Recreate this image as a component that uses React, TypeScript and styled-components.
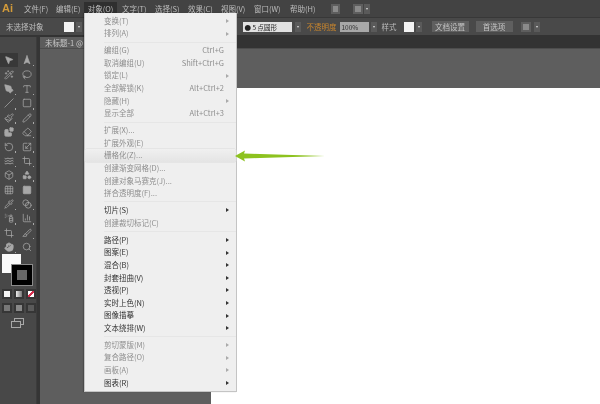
import { FunctionComponent } from "react";
import styled, { createGlobalStyle } from "styled-components";
import {
  ChartColumn,
  Eraser,
  Grid3x3,
  Hand,
  Lasso,
  MousePointer2,
  Navigation2,
  Paintbrush,
  Pencil,
  PenTool,
  Pipette,
  RotateCcw,
  Scaling,
  Search,
  Shapes,
  Slash,
  Square,
  Type,
  Waves,
  Wand2,
  Crop,
  Blend,
  Blocks,
  Box,
  SprayCan,
  Slice,
  type LucideIcon,
} from "lucide-react";

const GlobalStyle = createGlobalStyle`
  html, body { margin: 0; padding: 0; background: #5c5c5c; }
  * { box-sizing: border-box; }
`;

const Root = styled.div`
  position: relative;
  width: 600px;
  height: 404px;
  overflow: hidden;
  display: flex;
  flex-direction: column;
  background: #4a4a4a;
  font-family: "Noto Sans CJK SC", "Noto Sans", sans-serif;
  font-size: 7.5px;
  color: #bcbcbc;
  filter: blur(0.5px);
`;

const MenuBar = styled.div`
  height: 17px;
  flex: none;
  display: flex;
  align-items: center;
  padding-left: 2px;
  background: #434343;
`;
const Logo = styled.div`
  width: 12px;
  height: 13px;
  margin-right: 10px;
  font: bold 11px/13px "Liberation Sans", sans-serif;
  color: #d19a3a;
`;
const MenuTitle = styled.div<{ $left: number; $w: number; $active?: boolean }>`
  width: ${(p) => p.$w}px;
  height: 13px;
  margin-left: ${(p) => p.$left}px;
  line-height: 13px;
  text-align: center;
  white-space: nowrap;
  background: ${(p) => (p.$active ? "#2f2f2f" : "transparent")};
`;
const BarIcon = styled.div<{ $left: number; $w: number }>`
  width: ${(p) => p.$w}px;
  height: 10px;
  margin-left: ${(p) => p.$left}px;
  background: #8a8a8a;
  border: 2px solid #5e5e5e;
`;

const OptionBar = styled.div`
  height: 18px;
  flex: none;
  display: flex;
  align-items: center;
  padding-left: 6px;
  background: #494949;
  border-top: 1px solid #383838;
`;
const Label = styled.div<{ $left?: number; $color?: string }>`
  margin-left: ${(p) => p.$left ?? 0}px;
  color: ${(p) => p.$color ?? "#bcbcbc"};
  white-space: nowrap;
`;
const Swatch = styled.div<{ $left: number }>`
  width: 10px;
  height: 10px;
  margin-left: ${(p) => p.$left}px;
  background: #f4f4f4;
`;
const Drop = styled.div<{ $left?: number }>`
  width: 6px;
  height: 10px;
  margin-left: ${(p) => p.$left ?? 2}px;
  background: #5a5a5a;
  display: flex;
  align-items: center;
  justify-content: center;
  &::after {
    content: "";
    border: 1.5px solid transparent;
    border-top: 2px solid #ddd;
    border-bottom: 0;
  }
`;
const Field = styled.div<{ $left: number; $w: number; $bg: string; $color: string }>`
  width: ${(p) => p.$w}px;
  height: 10px;
  margin-left: ${(p) => p.$left}px;
  padding-left: 2px;
  background: ${(p) => p.$bg};
  color: ${(p) => p.$color};
  font-size: 6.5px;
  line-height: 10px;
  white-space: nowrap;
`;
const BarButton = styled.div<{ $left: number }>`
  width: 37px;
  height: 11px;
  margin-left: ${(p) => p.$left}px;
  background: #5f5f5f;
  color: #c4c4c4;
  text-align: center;
  line-height: 11px;
`;

const Workspace = styled.div`
  flex: 1;
  display: flex;
  min-height: 0;
`;
const ToolPanel = styled.div`
  width: 40px;
  flex: none;
  padding-top: 2px;
  background: #353535;
`;
const ToolInner = styled.div`
  width: 37px;
  height: 100%;
  padding-top: 16px;
  background: #484848;
  border-right: 1px solid #3c3c3c;
`;
const ToolGrid = styled.div`
  display: grid;
  grid-template-columns: 18px 18px;
  grid-auto-rows: 14.4px;
`;
const ToolCell = styled.div<{ $active?: boolean; $mark?: boolean }>`
  position: relative;
  display: flex;
  align-items: center;
  justify-content: center;
  color: #a8a8a8;
  background: ${(p) => (p.$active ? "#383838" : "transparent")};
  &::after {
    content: "";
    display: ${(p) => (p.$mark ? "block" : "none")};
    position: absolute;
    right: 2px;
    bottom: 1px;
    width: 1.5px;
    height: 1.5px;
    background: #aaa;
  }
`;
const ColorStack = styled.div`
  position: relative;
  height: 33px;
  margin-left: 2px;
`;
const FillBox = styled.div`
  position: absolute;
  left: 0;
  top: 0;
  width: 19px;
  height: 19px;
  background: #fafafa;
`;
const StrokeBox = styled.div`
  position: absolute;
  left: 10px;
  top: 11px;
  width: 20px;
  height: 20px;
  background: #666;
  border: 5px solid #000;
  outline: 1px solid #8a8a8a;
`;
const MiniRow = styled.div<{ $top: number }>`
  display: flex;
  gap: 2px;
  margin: ${(p) => p.$top}px 0 0 2px;
`;
const Mini = styled.div<{ $bg: string }>`
  width: 10px;
  height: 10px;
  background: ${(p) => p.$bg};
  border: 2px solid #363636;
`;
const ScreenMode = styled.div`
  margin: 5px 0 0 11px;
  color: #a8a8a8;
  display: flex;
`;

const DocumentArea = styled.div`
  flex: 1;
  display: flex;
  flex-direction: column;
  min-width: 0;
`;
const TabStrip = styled.div`
  height: 13px;
  flex: none;
  display: flex;
  align-items: flex-end;
  background: #333;
`;
const DocTab = styled.div`
  width: 60px;
  height: 11px;
  padding-left: 5px;
  line-height: 11px;
  background: #5c5c5c;
  color: #c8c8c8;
  white-space: nowrap;
`;
const Pasteboard = styled.div`
  flex: 1;
  padding: 39px 0 0 171px;
  background: #5e5e5e;
  border-top: 1px solid #4d4d4d;
`;
const Artboard = styled.div`
  height: 100%;
  background: #fff;
`;

const Menu = styled.div`
  position: absolute;
  left: 84px;
  top: 13px;
  width: 153px;
  height: 379px;
  padding: 1.7px 0 0;
  background: #efefef;
  border: 1px solid #c4c4c4;
  border-top: 0;
  box-shadow: -1px 0 1px rgba(0, 0, 0, 0.2);
`;
const Row = styled.div<{ $off?: boolean; $hot?: boolean }>`
  height: 12.6px;
  display: flex;
  align-items: center;
  padding: 0 7px 0 19px;
  line-height: 12.6px;
  color: ${(p) => (p.$off ? "#8e8e8e" : "#333")};
  background: ${(p) => (p.$hot ? "linear-gradient(#f0f0f0, #e4e4e4)" : "transparent")};
  box-shadow: ${(p) => (p.$hot ? "0 0 0 0.5px #dcdcdc" : "none")};
  border-radius: 2px;
`;
const RowLabel = styled.span`
  flex: 1;
  white-space: nowrap;
`;
const Shortcut = styled.span`
  margin-right: 5px;
  color: #8e8e8e;
`;
const Caret = styled.span<{ $off?: boolean }>`
  width: 0;
  height: 0;
  border-left: 3px solid ${(p) => (p.$off ? "#aaa" : "#333")};
  border-top: 2px solid transparent;
  border-bottom: 2px solid transparent;
`;
const Separator = styled.div`
  height: 4.4px;
  margin-left: 19px;
  display: flex;
  align-items: center;
  &::after {
    content: "";
    flex: 1;
    height: 1px;
    background: #e6e6e6;
  }
`;
const ArrowMark = styled.svg`
  position: absolute;
  left: 234px;
  top: 150px;
`;

type Item = { t: string; off?: boolean; sub?: boolean; key?: string; hot?: boolean } | "sep";
const items: Item[] = [
  { t: "变换(T)", off: true, sub: true },
  { t: "排列(A)", off: true, sub: true },
  "sep",
  { t: "编组(G)", off: true, key: "Ctrl+G" },
  { t: "取消编组(U)", off: true, key: "Shift+Ctrl+G" },
  { t: "锁定(L)", off: true, sub: true },
  { t: "全部解锁(K)", off: true, key: "Alt+Ctrl+2" },
  { t: "隐藏(H)", off: true, sub: true },
  { t: "显示全部", off: true, key: "Alt+Ctrl+3" },
  "sep",
  { t: "扩展(X)...", off: true },
  { t: "扩展外观(E)", off: true },
  { t: "栅格化(Z)...", off: true, hot: true },
  { t: "创建渐变网格(D)...", off: true },
  { t: "创建对象马赛克(J)...", off: true },
  { t: "拼合透明度(F)...", off: true },
  "sep",
  { t: "切片(S)", sub: true },
  { t: "创建裁切标记(C)", off: true },
  "sep",
  { t: "路径(P)", sub: true },
  { t: "图案(E)", sub: true },
  { t: "混合(B)", sub: true },
  { t: "封套扭曲(V)", sub: true },
  { t: "透视(P)", sub: true },
  { t: "实时上色(N)", sub: true },
  { t: "图像描摹", sub: true },
  { t: "文本绕排(W)", sub: true },
  "sep",
  { t: "剪切蒙版(M)", off: true, sub: true },
  { t: "复合路径(O)", off: true, sub: true },
  { t: "画板(A)", off: true, sub: true },
  { t: "图表(R)", sub: true },
];

const tools: { I: LucideIcon; mark?: boolean; fill?: boolean }[] = [
  { I: MousePointer2, fill: true },
  { I: Navigation2, fill: true, mark: true },
  { I: Wand2 },
  { I: Lasso },
  { I: PenTool, fill: true, mark: true },
  { I: Type, mark: true },
  { I: Slash, mark: true },
  { I: Square, mark: true },
  { I: Paintbrush, mark: true },
  { I: Pencil, mark: true },
  { I: Blocks, fill: true },
  { I: Eraser, mark: true },
  { I: RotateCcw, mark: true },
  { I: Scaling, mark: true },
  { I: Waves, fill: true, mark: true },
  { I: Crop, mark: true },
  { I: Box, mark: true },
  { I: Shapes, fill: true, mark: true },
  { I: Grid3x3 },
  { I: Square, fill: true },
  { I: Pipette, mark: true },
  { I: Blend, mark: true },
  { I: SprayCan, mark: true },
  { I: ChartColumn, mark: true },
  { I: Crop },
  { I: Slice, mark: true },
  { I: Hand, fill: true, mark: true },
  { I: Search },
];

const titles: [string, number, number, boolean?][] = [
  ["文件(F)", 0, 23],
  ["编辑(E)", 9, 23],
  ["对象(O)", 5, 33, true],
  ["文字(T)", 5, 23],
  ["选择(S)", 10, 23],
  ["效果(C)", 10, 23],
  ["视图(V)", 10, 23],
  ["窗口(W)", 10, 26],
  ["帮助(H)", 10, 23],
];

const App: FunctionComponent = () => {
  return (
    <Root>
      <GlobalStyle />
      <MenuBar>
        <Logo>Ai</Logo>
        {titles.map(([t, left, w, active]) => (
          <MenuTitle key={t} $left={left} $w={w} $active={active}>
            {t}
          </MenuTitle>
        ))}
        <BarIcon $left={18} $w={9} />
        <BarIcon $left={13} $w={10} />
        <Drop $left={1} />
      </MenuBar>
      <OptionBar>
        <Label>未选择对象</Label>
        <Swatch $left={20} />
        <Drop />
        <Field $left={161} $w={49} $bg="#e2e2e2" $color="#222">
          ● 5 点圆形
        </Field>
        <Drop $left={3} />
        <Label $left={6} $color="#c8852d">
          不透明度
        </Label>
        <Field $left={3} $w={29} $bg="#a8a8a8" $color="#333">
          100%
        </Field>
        <Drop />
        <Label $left={5}>样式</Label>
        <Swatch $left={7} />
        <Drop />
        <BarButton $left={10}>文档设置</BarButton>
        <BarButton $left={7}>首选项</BarButton>
        <BarIcon $left={8} $w={10} />
        <Drop $left={3} />
      </OptionBar>
      <Workspace>
        <ToolPanel>
          <ToolInner>
            <ToolGrid>
              {tools.map(({ I, mark, fill }, i) => (
                <ToolCell key={i} $active={i === 0} $mark={mark}>
                  <I size={10} strokeWidth={1.8} fill={fill ? "currentColor" : "none"} />
                </ToolCell>
              ))}
            </ToolGrid>
            <ColorStack>
              <FillBox />
              <StrokeBox />
            </ColorStack>
            <MiniRow $top={2}>
              <Mini $bg="#f4f4f4" />
              <Mini $bg="linear-gradient(90deg, #eee, #777)" />
              <Mini $bg="linear-gradient(135deg, #fff 40%, #d5304f 40%, #d5304f 60%, #fff 60%)" />
            </MiniRow>
            <MiniRow $top={4}>
              <Mini $bg="#777" />
              <Mini $bg="#888" />
              <Mini $bg="#5a5a5a" />
            </MiniRow>
            <ScreenMode>
              <svg width="13" height="10" viewBox="0 0 13 10" fill="none" stroke="currentColor">
                <rect x="3.5" y="0.5" width="9" height="6" />
                <rect x="0.5" y="3.5" width="9" height="6" fill="#484848" />
              </svg>
            </ScreenMode>
          </ToolInner>
        </ToolPanel>
        <DocumentArea>
          <TabStrip>
            <DocTab>未标题-1 @</DocTab>
          </TabStrip>
          <Pasteboard>
            <Artboard />
          </Pasteboard>
        </DocumentArea>
      </Workspace>
      <Menu>
        {items.map((it, i) =>
          it === "sep" ? (
            <Separator key={i} />
          ) : (
            <Row key={i} $off={it.off} $hot={it.hot}>
              <RowLabel>{it.t}</RowLabel>
              {it.key && <Shortcut>{it.key}</Shortcut>}
              {it.sub && <Caret $off={it.off} />}
            </Row>
          ),
        )}
      </Menu>
      <ArrowMark width="92" height="12" viewBox="0 0 92 12">
        <path d="M1 6 L11 0.5 L10 3.5 L91 6 L10 8.5 L11 11.5 Z" fill="#8dc21f" />
      </ArrowMark>
    </Root>
  );
};

export default App;
